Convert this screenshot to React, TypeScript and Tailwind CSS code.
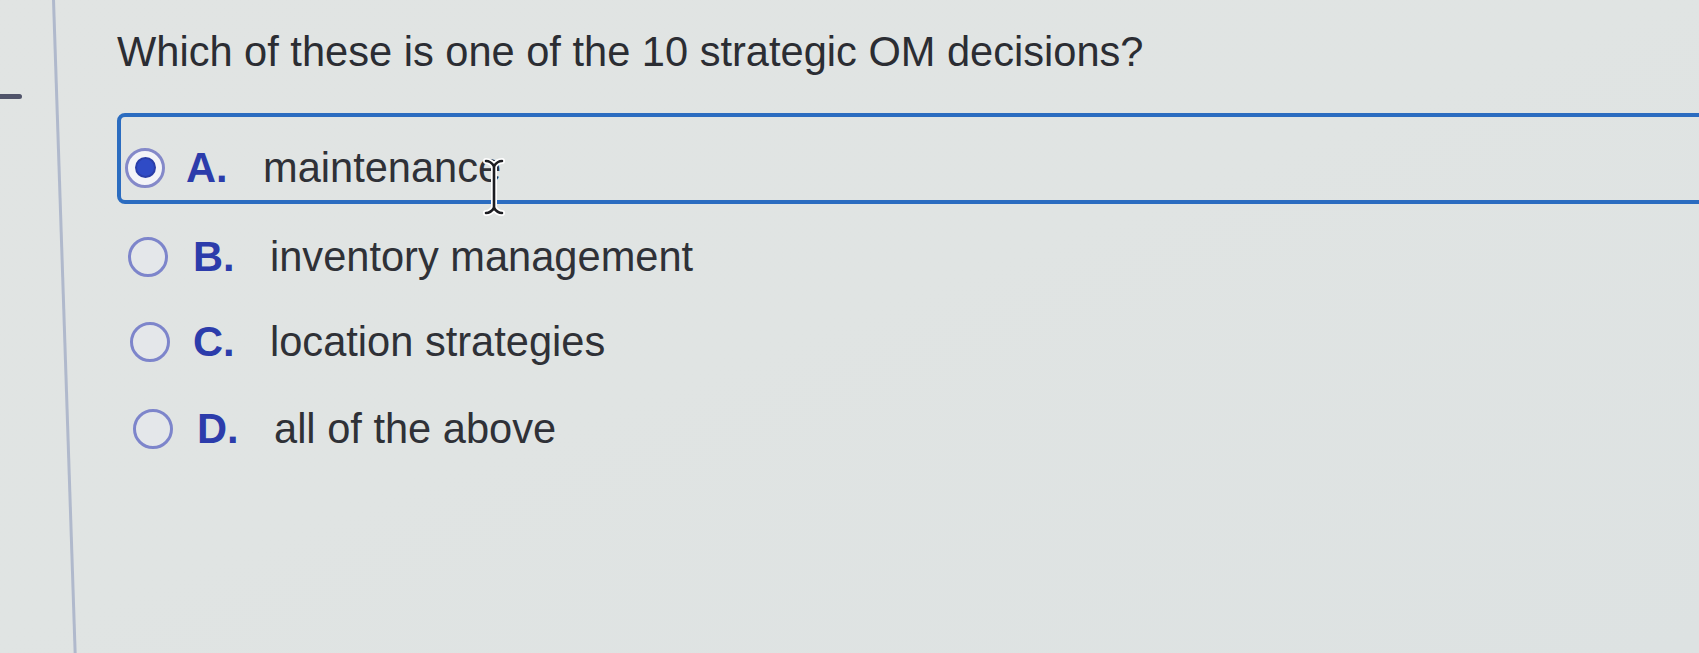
import React from "react";

function Radio({ selected }: { selected?: boolean }) {
  if (selected) {
    return (
      <div className="w-[40px] h-[40px] shrink-0 rounded-full border-[3px] border-[#8489c9] bg-[#f3f4f8] flex items-center justify-center">
        <div className="w-[21px] h-[21px] rounded-full bg-[#2f4bc6] border-[2px] border-[#2a3ea8]" />
      </div>
    );
  }
  return <div className="w-[40px] h-[40px] shrink-0 rounded-full border-[3px] border-[#7d85cb] bg-[#e4e7ea]" />;
}

function Cursor() {
  return (
    <svg
      className="absolute left-[219px] top-[12px]"
      width="24"
      height="58"
      viewBox="0 0 24 58"
      fill="none"
    >
      <g strokeLinecap="round">
        <path d="M4 3 C8 3 10 5 12 8 C14 5 16 3 20 3" stroke="#ffffff" strokeWidth="6" />
        <path d="M12 8 V50" stroke="#ffffff" strokeWidth="6" />
        <path d="M4 55 C8 55 10 53 12 50 C14 53 16 55 20 55" stroke="#ffffff" strokeWidth="6" />
        <path d="M4 3 C8 3 10 5 12 8 C14 5 16 3 20 3" stroke="#1c1d22" strokeWidth="2.6" />
        <path d="M12 8 V50" stroke="#1c1d22" strokeWidth="2.6" />
        <path d="M4 55 C8 55 10 53 12 50 C14 53 16 55 20 55" stroke="#1c1d22" strokeWidth="2.6" />
      </g>
    </svg>
  );
}

function Row({
  letter,
  text,
  selected,
  gapClass,
  cursor,
}: {
  letter: string;
  text: string;
  selected?: boolean;
  gapClass: string;
  cursor?: boolean;
}) {
  return (
    <div className="flex items-center h-[44px]">
      <Radio selected={selected} />
      <span className={`${gapClass} w-[77px] shrink-0 font-bold text-[#2c3cab] text-[41.6px] leading-[44px]`}>
        {letter}.
      </span>
      <span className="relative text-[#2f3137] text-[41.6px] leading-[44px] whitespace-nowrap">
        {text}
        {cursor && <Cursor />}
      </span>
    </div>
  );
}

export default function App() {
  return (
    <div
      className="w-[1699px] h-[653px] overflow-hidden flex bg-gradient-to-br from-[#e1e4e3] via-[#e0e4e3] to-[#dde2e2]"
      style={{ fontFamily: '"Liberation Sans", Arial, sans-serif' }}
    >
      <div className="w-[52px] shrink-0 pt-[94px]">
        <div className="w-[22px] h-[5px] bg-[#50546a] rounded-r-sm" />
      </div>
      <div className="w-[3px] shrink-0 bg-[#b0b9cc] origin-top skew-x-[1.9deg]" />
      <div className="flex-1 flex flex-col pl-[62px] pt-[31px]">
        <div className="text-[41.6px] leading-none text-[#2b2d33] whitespace-nowrap">
          Which of these is one of the 10 strategic OM decisions?
        </div>
        <div className="mt-[40px] w-[1640px] border-[4px] border-[#2b6cc0] rounded-l-[8px] pt-[29px] pb-[10px] pl-[4px]">
          <Row letter="A" text="maintenance" selected gapClass="ml-[21px]" cursor />
        </div>
        <div className="mt-[31px] pl-[11px]">
          <Row letter="B" text="inventory management" gapClass="ml-[25px]" />
        </div>
        <div className="mt-[41px] pl-[13px]">
          <Row letter="C" text="location strategies" gapClass="ml-[23px]" />
        </div>
        <div className="mt-[43px] pl-[16px]">
          <Row letter="D" text="all of the above" gapClass="ml-[24px]" />
        </div>
      </div>
    </div>
  );
}
